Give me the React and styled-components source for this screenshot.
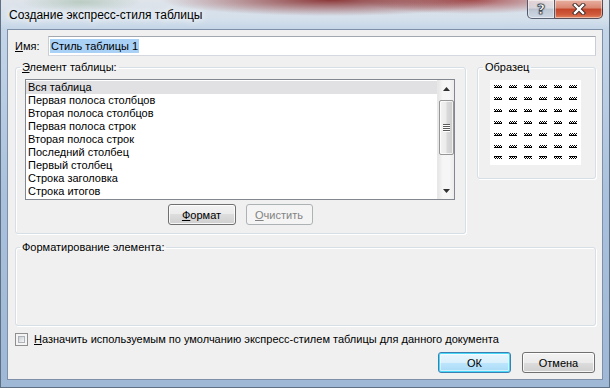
import React from 'react';
import styled, { createGlobalStyle } from 'styled-components';

const FONT = `"Liberation Sans", "Noto Sans", sans-serif`;

const GlobalStyle = createGlobalStyle`
  html, body { margin: 0; padding: 0; overflow: hidden; background: #ffffff; }
  body { font-family: ${FONT}; }
  * { box-sizing: border-box; }
`;

const Window = styled.div`
  width: 610px;
  height: 388px;
  display: flex;
  flex-direction: column;
  overflow: hidden;
  border: 1px solid #5f6f84;
  border-top: none;
  background:
    radial-gradient(ellipse 170px 16px at 330px 0px, rgba(125, 25, 25, 0.85), rgba(125, 25, 25, 0) 100%),
    radial-gradient(ellipse 110px 14px at 470px 0px, rgba(150, 35, 35, 0.75), rgba(150, 35, 35, 0) 100%),
    radial-gradient(ellipse 60px 10px at 80px 2px, rgba(120, 160, 120, 0.35), rgba(120, 160, 120, 0) 100%),
    linear-gradient(to bottom, #dfe4ea 0px, #d3dfeb 20px, #c4d5e8 29px, #a9c1dc 200px, #9fb8d5 100%);
`;

const TitleBar = styled.div`
  height: 29px;
  flex: none;
  display: flex;
  align-items: center;
  padding-left: 8px;
`;

const Title = styled.span`
  font-family: ${FONT};
  font-size: 12px;
  color: #000;
  text-shadow: 0 0 6px #ffffff, 0 0 10px #ffffff;
`;

const CaptionButtons = styled.div`
  margin-left: auto;
  margin-right: 6px;
  align-self: flex-start;
  display: flex;
  margin-top: -1px;
`;

const CaptionButton = styled.div`
  height: 20px;
  width: ${p => p.$w}px;
  display: flex;
  align-items: center;
  justify-content: center;
  border: 1px solid rgba(40, 50, 70, 0.75);
  border-left-width: ${p => (p.$first ? 1 : 0)}px;
  border-radius: ${p => (p.$first ? '0 0 0 5px' : '0 0 5px 0')};
  background: ${p =>
    p.$close
      ? 'linear-gradient(to bottom, #e8b1a2 0%, #d98670 45%, #c3452a 50%, #cf5a3b 80%, #e2855f 100%)'
      : 'linear-gradient(to bottom, rgba(255,255,255,0.55) 0%, rgba(220,228,236,0.5) 45%, rgba(170,182,196,0.6) 50%, rgba(200,210,222,0.6) 100%)'};
  box-shadow: inset 0 0 0 1px rgba(255, 255, 255, 0.45);
`;

const HelpGlyph = styled.span`
  font-family: "DejaVu Sans", sans-serif;
  font-weight: bold;
  font-size: 14px;
  color: #fff;
  line-height: 1;
  -webkit-text-stroke: 0.6px #2b3440;
  text-shadow: 0 0 1px #2b3440, 0 0 2px #2b3440;
`;

const Client = styled.div`
  flex: 1;
  margin: 0 6px 7px 6px;
  background: #f0f0f0;
  border: 1px solid #7d90a7;
  padding: 6px 6px 0 7px;
  display: flex;
  flex-direction: column;
  font-family: ${FONT};
  font-size: 11px;
  color: #000;
`;

const Key = styled.u`
  text-decoration: underline;
  text-underline-offset: 1px;
`;

const NameRow = styled.div`
  display: flex;
  align-items: center;
  height: 20px;
`;

const Label = styled.label`
  width: 33px;
  flex: none;
  line-height: 13px;
`;

const TextBox = styled.div`
  flex: 1;
  height: 20px;
  background: #fff;
  border: 1px solid #abadb3;
  border-color: #a3a8b0 #c9ced6 #d5d9df #c9ced6;
  padding: 2px 1px;
  display: flex;
  align-items: stretch;
`;

const Selection = styled.span`
  background: #a9d0f5;
  padding: 0 1px;
  line-height: 14px;
`;

const MiddleRow = styled.div`
  display: flex;
  align-items: flex-start;
  gap: 11px;
  margin-top: 5px;
`;

const Group = styled.fieldset`
  margin: 0;
  min-width: 0;
  width: ${p => p.$w};
  height: ${p => p.$h}px;
  border: 1px solid #d5dfe5;
  border-radius: 3px;
  padding: ${p => p.$pad};
  box-shadow: inset 1px 1px 0 #ffffff, 1px 1px 0 #ffffff;
`;

const Legend = styled.legend`
  font-size: 11px;
  line-height: 13px;
  padding: 0 2px;
  margin-left: ${p => p.$ml}px;
`;

const ListBox = styled.div`
  width: 430px;
  height: 121px;
  border: 1px solid #828790;
  background: #fff;
  display: flex;
`;

const Items = styled.div`
  flex: 1;
  padding-top: 1px;
`;

const Item = styled.div`
  height: 13px;
  line-height: 13px;
  padding-left: 2px;
  white-space: nowrap;
  background: ${p => (p.$selected ? '#e1e1e4' : 'transparent')};
`;

const ScrollBar = styled.div`
  width: 17px;
  flex: none;
  display: flex;
  flex-direction: column;
  align-items: center;
  background: linear-gradient(to right, #e6e6e6, #f6f6f6 30%, #f6f6f6 70%, #ececec);
  border-left: 1px solid #e8e8e8;
`;

const Arrow = styled.div`
  height: 17px;
  width: 100%;
  display: flex;
  align-items: center;
  justify-content: center;
`;

const Thumb = styled.div`
  margin-top: 3px;
  width: 15px;
  height: 55px;
  border: 1px solid #969696;
  border-radius: 2px;
  background: linear-gradient(to right, #f2f2f2 0%, #ebebeb 45%, #d9d9d9 55%, #cdcdcd 100%);
  box-shadow: inset 0 0 0 1px rgba(255, 255, 255, 0.7);
  display: flex;
  flex-direction: column;
  align-items: center;
  justify-content: center;
  gap: 1px;
`;

const Grip = styled.div`
  width: 7px;
  height: 1px;
  background: #5a5a5a;
  box-shadow: 0 1px 0 #ffffff;
`;

const Spacer = styled.div`
  flex: 1;
`;

const ButtonRow = styled.div`
  display: flex;
  justify-content: ${p => p.$justify || 'center'};
  gap: ${p => p.$gap}px;
  margin-top: ${p => p.$mt}px;
  width: ${p => p.$w || 'auto'};
  padding-right: ${p => p.$pr || 0}px;
`;

const Button = styled.div`
  width: ${p => p.$w}px;
  height: 21px;
  display: flex;
  align-items: center;
  justify-content: center;
  border-radius: 3px;
  font-size: 11px;
  border: 1px solid ${p => (p.$disabled ? '#adb2b5' : p.$default ? '#3c7fb1' : '#707070')};
  color: ${p => (p.$disabled ? '#838383' : '#000')};
  background: ${p =>
    p.$disabled
      ? '#f4f4f4'
      : p.$default
      ? 'linear-gradient(to bottom, #eaf6fd 0%, #d9f0fc 50%, #bee6fd 50%, #a7d9f5 100%)'
      : 'linear-gradient(to bottom, #f2f2f2 0%, #ebebeb 50%, #dddddd 50%, #cfcfcf 100%)'};
  box-shadow: ${p =>
    p.$disabled
      ? 'none'
      : p.$default
      ? 'inset 0 0 0 1px #48d9f9, inset 0 0 0 2px rgba(255,255,255,0.5)'
      : 'inset 0 0 0 1px rgba(255,255,255,0.8)'};
`;

const SampleBox = styled.div`
  width: 91px;
  height: 85px;
  background: #fff;
  display: flex;
`;

const CheckRow = styled.div`
  display: flex;
  align-items: center;
  gap: 6px;
  margin-top: 7px;
  height: 13px;
`;

const CheckBox = styled.div`
  width: 13px;
  height: 13px;
  border: 1px solid #8e8f8f;
  background: #f4f4f4;
  padding: 2px;
  display: flex;
`;

const CheckInner = styled.div`
  flex: 1;
  border: 1px solid #aeb3b9;
  background: linear-gradient(135deg, #cbcfd5 0%, #f6f6f6 100%);
`;

const CheckLabel = styled.span`
  line-height: 13px;
  white-space: nowrap;
`;

const items = [
  'Вся таблица',
  'Первая полоса столбцов',
  'Вторая полоса столбцов',
  'Первая полоса строк',
  'Вторая полоса строк',
  'Последний столбец',
  'Первый столбец',
  'Строка заголовка',
  'Строка итогов',
];

function SamplePattern() {
  const cols = [0, 1, 2, 3, 4, 5];
  const rows = [0, 1, 2, 3, 4, 5, 6];
  return (
    <svg width="91" height="85" viewBox="0 0 91 85" shapeRendering="crispEdges">
      <defs>
        <pattern id="chk" width="2" height="3" patternUnits="userSpaceOnUse">
          <rect x="1" y="0" width="1" height="1" fill="#000" />
          <rect x="0" y="1" width="2" height="1" fill="#000" />
          <rect x="0" y="2" width="1" height="1" fill="#000" />
        </pattern>
      </defs>
      {rows.map(r =>
        cols.map(c => (
          <rect
            key={`${r}-${c}`}
            x={4 + c * 15}
            y={5 + Math.round(r * 11.9)}
            width="8"
            height="3"
            fill="url(#chk)"
          />
        ))
      )}
    </svg>
  );
}

function CloseGlyph() {
  return (
    <svg width="14" height="12" viewBox="0 0 14 12">
      <path d="M3 2 L11 10 M11 2 L3 10" stroke="#3a2a28" strokeWidth="4.2" strokeLinecap="square" />
      <path d="M3 2 L11 10 M11 2 L3 10" stroke="#ffffff" strokeWidth="2.4" strokeLinecap="square" />
    </svg>
  );
}

function TriUp() {
  return (
    <svg width="7" height="4" viewBox="0 0 7 4">
      <path d="M0 4 L3.5 0 L7 4 Z" fill="#303030" />
    </svg>
  );
}

function TriDown() {
  return (
    <svg width="7" height="4" viewBox="0 0 7 4">
      <path d="M0 0 L3.5 4 L7 0 Z" fill="#303030" />
    </svg>
  );
}

export default function App() {
  return (
    <>
      <GlobalStyle />
      <Window>
        <TitleBar>
          <Title>Создание экспресс-стиля таблицы</Title>
          <CaptionButtons>
            <CaptionButton $w={28} $first>
              <HelpGlyph>?</HelpGlyph>
            </CaptionButton>
            <CaptionButton $w={48} $close>
              <CloseGlyph />
            </CaptionButton>
          </CaptionButtons>
        </TitleBar>
        <Client>
          <NameRow>
            <Label>
              <Key>И</Key>мя:
            </Label>
            <TextBox>
              <Selection>Стиль таблицы 1</Selection>
            </TextBox>
          </NameRow>

          <MiddleRow>
            <Group $w="451px" $h={173} $pad="5px 9px 0 9px">
              <Legend $ml={-5}>
                <Key>Э</Key>лемент таблицы:
              </Legend>
              <ListBox>
                <Items>
                  {items.map((t, i) => (
                    <Item key={t} $selected={i === 0}>
                      {t}
                    </Item>
                  ))}
                </Items>
                <ScrollBar>
                  <Arrow>
                    <TriUp />
                  </Arrow>
                  <Thumb>
                    <Grip />
                    <Grip />
                    <Grip />
                    <Grip />
                  </Thumb>
                  <Spacer />
                  <Arrow>
                    <TriDown />
                  </Arrow>
                </ScrollBar>
              </ListBox>
              <ButtonRow $gap={10} $mt={4} $w="430px">
                <Button $w={68}>
                  <span>
                    <Key>Ф</Key>ормат
                  </span>
                </Button>
                <Button $w={67} $disabled>
                  <span>
                    <Key>О</Key>чистить
                  </span>
                </Button>
              </ButtonRow>
            </Group>

            <Group $w="119px" $h={118} $pad="6px 12px 0 12px">
              <Legend $ml={-7}>Образец</Legend>
              <SampleBox>
                <SamplePattern />
              </SampleBox>
            </Group>
          </MiddleRow>

          <Group $w="100%" $h={85} $pad="0 9px" style={{ marginTop: 7 }}>
            <Legend $ml={-5}>Форматирование элемента:</Legend>
          </Group>

          <CheckRow>
            <CheckBox>
              <CheckInner />
            </CheckBox>
            <CheckLabel>
              <Key>Н</Key>азначить используемым по умолчанию экспресс-стилем таблицы для данного документа
            </CheckLabel>
          </CheckRow>

          <ButtonRow $justify="flex-end" $gap={11} $mt={6} $pr={1}>
            <Button $w={73} $default>
              ОК
            </Button>
            <Button $w={73}>Отмена</Button>
          </ButtonRow>
        </Client>
      </Window>
    </>
  );
}
